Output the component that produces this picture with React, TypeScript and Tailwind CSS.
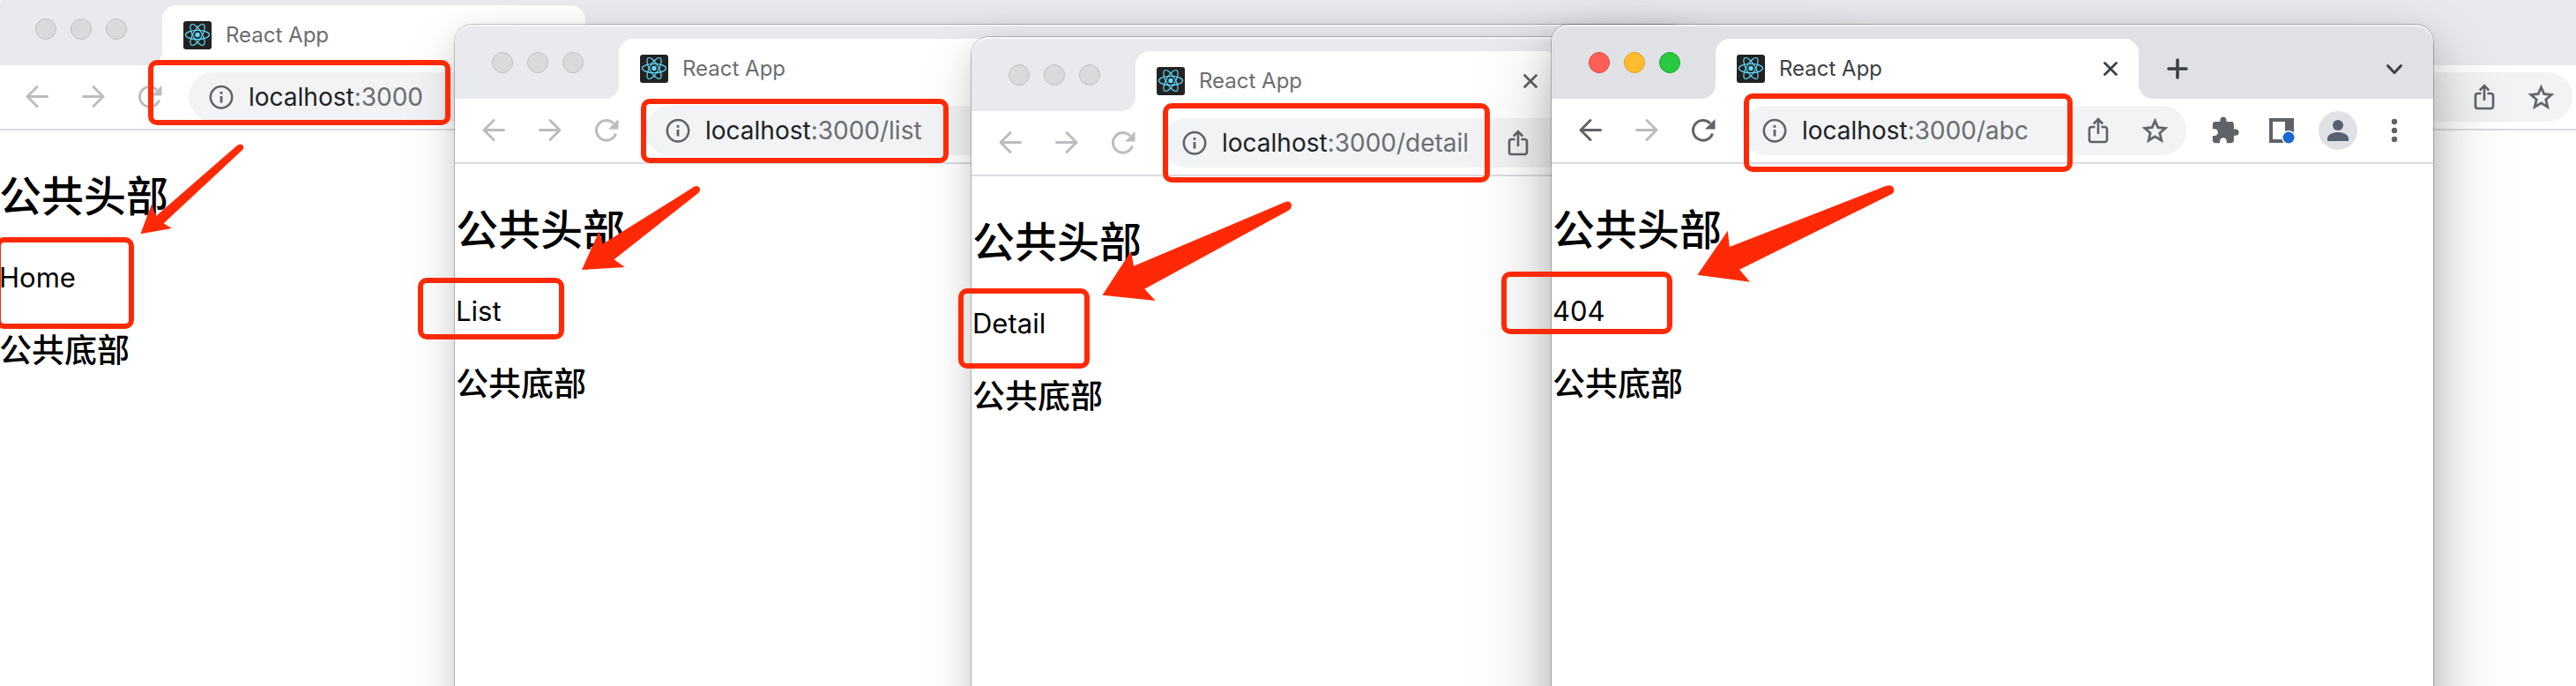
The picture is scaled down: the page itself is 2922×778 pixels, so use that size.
import React from "react";

type BrowserWindow = {
  path: string;
  body: string;
  active: boolean;
  place: string;
  shadow: string;
};

const windows: BrowserWindow[] = [
  { path: "", body: "Home", active: false, place: "left-[-2px] right-[-276px] top-[-10px]", shadow: "" },
  {
    path: "/list",
    body: "List",
    active: false,
    place: "left-[516px] top-7 w-[1400px]",
    shadow: "shadow-[0_0_0_1px_rgba(0,0,0,0.22),0_10px_30px_rgba(0,0,0,0.08),0_20px_60px_rgba(0,0,0,0.16)]",
  },
  {
    path: "/detail",
    body: "Detail",
    active: false,
    place: "left-[1102px] top-[42px] w-[1000px]",
    shadow: "shadow-[0_0_0_1px_rgba(0,0,0,0.22),0_10px_30px_rgba(0,0,0,0.08),0_20px_60px_rgba(0,0,0,0.16)]",
  },
  {
    path: "/abc",
    body: "404",
    active: true,
    place: "left-[1760px] top-7 w-[1000px]",
    shadow: "shadow-[0_0_0_1px_rgba(0,0,0,0.24),0_16px_36px_rgba(0,0,0,0.14),0_36px_90px_rgba(0,0,0,0.26)]",
  },
];

const highlights = [
  "left-[168px] top-[68px] w-[343px] h-[74px]",
  "left-[-5px] top-[269px] w-[157px] h-[104px]",
  "left-[727px] top-[112px] w-[349px] h-[73px]",
  "left-[474px] top-[315px] w-[166px] h-[70px]",
  "left-[1319px] top-[117px] w-[371px] h-[90px]",
  "left-[1087px] top-[327px] w-[149px] h-[91px]",
  "left-[1978px] top-[106px] w-[373px] h-[89px]",
  "left-[1703px] top-[308px] w-[194px] h-[71px]",
];

const arrows = [
  "M159.400 265.300 L172 231.500 L177 245 L269 165 Q273 162 275.500 165 Q277 168 275 170 L185.700 253.300 L195 259 Z",
  "M660 306 L679.600 262.300 L683.700 276.700 L787 212 Q791 209.500 793.500 213 Q795 216.500 792 219 L696.600 294.300 L708.700 303 Z",
  "M1250.500 334.700 L1283 284.700 L1286 301.700 L1457 229.500 Q1463 227 1464.800 231.500 Q1466 236 1462 238.500 L1298.300 327.700 L1310.700 341 Z",
  "M1925.400 311.700 L1959.800 261.700 L1961.800 280 L2139 211 Q2146 208.500 2148 213.500 Q2149.500 218 2145 220.500 L1973.200 305.700 L1985 319.700 Z",
];

function ReactIcon() {
  return (
    <svg viewBox="0 0 32 32" className="size-8 shrink-0" aria-hidden="true">
      <rect width="32" height="32" rx="3" fill="#222" />
      <circle cx="16" cy="15.500" r="2.700" fill="#61dafb" />
      <g fill="none" stroke="#61dafb" strokeWidth="1.200">
        <ellipse cx="16" cy="15.500" rx="13.500" ry="5.100" />
        <ellipse cx="16" cy="15.500" rx="13.500" ry="5.100" transform="rotate(60 16 15.500)" />
        <ellipse cx="16" cy="15.500" rx="13.500" ry="5.100" transform="rotate(120 16 15.500)" />
      </g>
    </svg>
  );
}

function BackIcon() {
  return (
    <svg viewBox="0 0 32 32" className="size-8" fill="none" stroke="currentColor" strokeWidth="3" strokeLinecap="round" strokeLinejoin="round" aria-hidden="true">
      <path d="M27.500 15.500H5M16 4.500L5 15.500l11 11" />
    </svg>
  );
}

function ForwardIcon() {
  return (
    <svg viewBox="0 0 32 32" className="size-8" fill="none" stroke="currentColor" strokeWidth="3" strokeLinecap="round" strokeLinejoin="round" aria-hidden="true">
      <path d="M4.500 15.500H27M16 4.500l11 11-11 11" />
    </svg>
  );
}

function ReloadIcon() {
  return (
    <svg viewBox="0 0 32 32" className="size-8" aria-hidden="true">
      <path d="M26.500 19.500A11.300 11.300 0 1 1 24 8" fill="none" stroke="currentColor" strokeWidth="3" />
      <path d="M29.500 3v11.500H18z" fill="currentColor" />
    </svg>
  );
}

function InfoIcon() {
  return (
    <svg viewBox="0 0 28 28" className="size-7 shrink-0 text-[#5f6368]" aria-hidden="true">
      <circle cx="14" cy="14.300" r="12.200" fill="none" stroke="currentColor" strokeWidth="2.500" />
      <path d="M12.600 13h2.800v7.500h-2.800zM12.600 8h2.800v2.800h-2.800z" fill="currentColor" />
    </svg>
  );
}

function ShareIcon() {
  return (
    <svg viewBox="0 0 32 32" className="size-8" fill="none" stroke="currentColor" strokeWidth="2.600" aria-hidden="true">
      <path d="M12.500 12H8.500a2.500 2.500 0 0 0-2.500 2.500v12A2.500 2.500 0 0 0 8.500 29h15a2.500 2.500 0 0 0 2.500-2.500v-12a2.500 2.500 0 0 0-2.500-2.500h-4M16 20V4M10.800 8.500L16 3.200l5.200 5.300" />
    </svg>
  );
}

function StarIcon() {
  return (
    <svg viewBox="0 0 24 24" className="size-[35px]" fill="currentColor" stroke="currentColor" strokeWidth="0.300" aria-hidden="true">
      <path d="M22 9.240l-7.190-.62L12 2 9.190 8.630 2 9.240l5.460 4.730L5.820 21 12 17.270 18.180 21l-1.630-7.030L22 9.240zM12 15.400l-3.760 2.270 1-4.280-3.320-2.880 4.380-.38L12 6.100l1.710 4.040 4.380.38-3.320 2.880 1 4.280L12 15.400z" />
    </svg>
  );
}

function PuzzleIcon() {
  return (
    <svg viewBox="0 0 24 24" className="size-[34px]" fill="currentColor" aria-hidden="true">
      <path d="M20.500 11H19V7c0-1.100-.9-2-2-2h-4V3.500C13 2.120 11.880 1 10.500 1S8 2.120 8 3.500V5H4c-1.100 0-1.990.9-1.990 2v3.800H3.500c1.490 0 2.700 1.210 2.700 2.700s-1.210 2.700-2.700 2.700H2V20c0 1.100.9 2 2 2h3.800v-1.500c0-1.490 1.210-2.700 2.700-2.700 1.490 0 2.700 1.210 2.700 2.700V22H17c1.100 0 2-.9 2-2v-4h1.500c1.380 0 2.500-1.120 2.500-2.500S21.880 11 20.500 11z" />
    </svg>
  );
}

function PanelIcon() {
  return (
    <svg viewBox="0 0 32 32" className="size-8" aria-hidden="true">
      <path d="M2 2h28v28H2zM6 6v20h14V6z" fill="#5f6368" fillRule="evenodd" />
      <circle cx="24" cy="24" r="8" fill="#fff" />
      <circle cx="24" cy="24" r="6.500" fill="#1967d2" />
    </svg>
  );
}

function IconButton({ label, className, children }: { label: string; className: string; children: React.ReactNode }) {
  return (
    <button type="button" aria-label={label} className={`flex h-14 w-16 shrink-0 items-center justify-center ${className}`}>
      {children}
    </button>
  );
}

function TabStrip({ active }: { active: boolean }) {
  const frame = active ? "text-[#dfe1e5]" : "text-[#e8eaed]";
  const ink = active ? "text-[#3c4043]" : "text-[#5f6368]";
  const light = "size-6 rounded-full border";
  return (
    <div className={`flex h-[84px] items-stretch rounded-t-[20px] bg-current pt-4 shadow-[inset_0_2px_1px_rgba(255,255,255,0.6)] ${frame}`}>
      <div className="flex w-[186px] shrink-0 items-start gap-4 pl-[42px] pt-[15px]">
        <span className={`${light} ${active ? "border-[#e0443e] bg-[#ff5f57]" : "border-[#bfbfc1] bg-[#dadadc]"}`} />
        <span className={`${light} ${active ? "border-[#dea123] bg-[#febc2e]" : "border-[#bfbfc1] bg-[#dadadc]"}`} />
        <span className={`${light} ${active ? "border-[#1aab29] bg-[#28c840]" : "border-[#bfbfc1] bg-[#dadadc]"}`} />
      </div>
      <div className="relative flex w-[480px] shrink-0 items-center rounded-t-2xl bg-white pl-6">
        <svg viewBox="0 0 16 16" className="absolute -left-4 bottom-0 size-4" fill="#fff" aria-hidden="true">
          <path d="M16 0v16H0A16 16 0 0 0 16 0z" />
        </svg>
        <svg viewBox="0 0 16 16" className="absolute -right-4 bottom-0 size-4" fill="#fff" aria-hidden="true">
          <path d="M0 0v16h16A16 16 0 0 1 0 0z" />
        </svg>
        <ReactIcon />
        <span className={`ml-4 flex-1 text-2xl leading-8 ${active ? "text-[#3c4043]" : "text-[#6b6d70]"}`}>React App</span>
        <button type="button" aria-label="Close tab" className={`flex w-16 justify-center ${ink}`}>
          <svg viewBox="0 0 16 16" className="size-4" fill="none" stroke="currentColor" strokeWidth="2.800" strokeLinecap="round" aria-hidden="true">
            <path d="M1.500 1.500l13 13M14.500 1.500l-13 13" />
          </svg>
        </button>
      </div>
      <button type="button" aria-label="New tab" className={`flex w-[88px] items-center justify-center ${ink}`}>
        <svg viewBox="0 0 24 24" className="size-6" fill="none" stroke="currentColor" strokeWidth="3.600" strokeLinecap="round" aria-hidden="true">
          <path d="M12 2v20M2 12h20" />
        </svg>
      </button>
      <button type="button" aria-label="Search tabs" className={`ml-auto mr-3 flex w-16 items-center justify-center ${ink}`}>
        <svg viewBox="0 0 20 20" className="size-5" fill="none" stroke="currentColor" strokeWidth="3" strokeLinecap="round" strokeLinejoin="round" aria-hidden="true">
          <path d="M2.500 6.500l7.500 8 7.500-8" />
        </svg>
      </button>
    </div>
  );
}

function Toolbar({ active, path }: { active: boolean; path: string }) {
  const faded = "text-[#babcbe]";
  const ink = "text-[#5f6368]";
  return (
    <div className="flex h-[74px] items-center border-b-2 border-[#dadce0] bg-white px-3">
      <IconButton label="Back" className={active ? ink : faded}><BackIcon /></IconButton>
      <IconButton label="Forward" className={faded}><ForwardIcon /></IconButton>
      <IconButton label="Reload" className={active ? ink : faded}><ReloadIcon /></IconButton>
      <div className="mx-3 flex h-14 flex-1 items-center rounded-full bg-[#f1f3f4] pl-[23px] pr-1">
        <InfoIcon />
        <a href={`http://localhost:3000${path}`} className="ml-[17px] flex-1 text-[28px] leading-9 text-[#6b6d70]">
          <span className="text-[#202124]">localhost</span>:3000{path}
        </a>
        <IconButton label="Share" className={ink}><ShareIcon /></IconButton>
        <IconButton label="Bookmark" className={ink}><StarIcon /></IconButton>
      </div>
      <IconButton label="Extensions" className={ink}><PuzzleIcon /></IconButton>
      <IconButton label="Side panel" className={ink}><PanelIcon /></IconButton>
      <IconButton label="Profile" className={ink}>
        <svg viewBox="0 0 44 44" className="size-11" aria-hidden="true">
          <circle cx="22" cy="22" r="22" fill="#dfe1e5" />
          <g fill="#566072">
            <circle cx="22" cy="16" r="6" />
            <path d="M10 34v-3c0-4.500 7-7 12-7s12 2.500 12 7v3z" />
          </g>
        </svg>
      </IconButton>
      <IconButton label="Menu" className={ink}>
        <svg viewBox="0 0 8 28" className="h-7 w-2" fill="currentColor" aria-hidden="true">
          <circle cx="4" cy="4" r="3.200" />
          <circle cx="4" cy="14" r="3.200" />
          <circle cx="4" cy="24" r="3.200" />
        </svg>
      </IconButton>
    </div>
  );
}

function Browser({ win }: { win: BrowserWindow }) {
  return (
    <section className={`absolute bottom-[-80px] flex flex-col rounded-[20px] bg-white ${win.place} ${win.shadow}`}>
      <TabStrip active={win.active} />
      <Toolbar active={win.active} path={win.path} />
      <main className="pl-px text-black">
        <h2 className="mt-[41px] mb-10 text-5xl leading-[67px] font-medium">公共头部</h2>
        <p className="text-[31px] leading-[38px]">{win.body}</p>
        <h3 className="my-[37px] text-[37px] leading-[54px] font-medium">公共底部</h3>
      </main>
    </section>
  );
}

export default function App() {
  return (
    <div className="relative min-h-screen w-full overflow-hidden bg-white font-[Inter,'Noto_Sans_CJK_SC',sans-serif]">
      {windows.map((win) => (
        <Browser key={win.body} win={win} />
      ))}
      {highlights.map((box) => (
        <div key={box} className={`pointer-events-none absolute rounded-[10px] border-6 border-[#ff2a05] ${box}`} />
      ))}
      <svg className="pointer-events-none absolute left-0 top-0 size-px overflow-visible" fill="#ff2a05" aria-hidden="true">
        {arrows.map((d) => (
          <path key={d} d={d} />
        ))}
      </svg>
    </div>
  );
}
